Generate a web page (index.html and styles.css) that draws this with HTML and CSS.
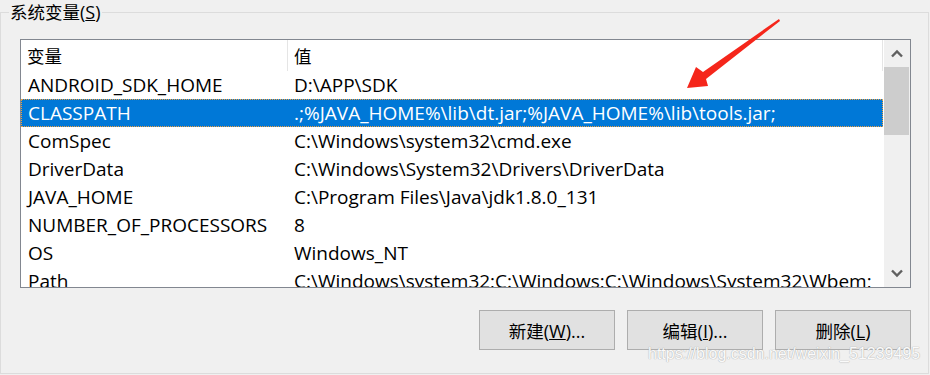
FILE: index.html
```html
<!DOCTYPE html>
<html>
<head>
    <meta charset="utf-8">
    <title>系统变量</title>
    <link rel="stylesheet" href="styles.css">
</head>
<body>
<fieldset class="group">
    <legend class="group-title"><span class="zh">系统变量</span>(<u>S</u>)</legend>
    <div class="listbox">
        <div class="list">
            <div class="list-head">
                <div class="col-name zh">变量</div>
                <div class="col-value zh">值</div>
            </div>
            <div class="row"><div class="col-name">ANDROID_SDK_HOME</div><div class="col-value">D:\APP\SDK</div></div>
            <div class="row selected"><div class="col-name">CLASSPATH</div><div class="col-value">.;%JAVA_HOME%\lib\dt.jar;%JAVA_HOME%\lib\tools.jar;</div></div>
            <div class="row"><div class="col-name">ComSpec</div><div class="col-value">C:\Windows\system32\cmd.exe</div></div>
            <div class="row"><div class="col-name">DriverData</div><div class="col-value">C:\Windows\System32\Drivers\DriverData</div></div>
            <div class="row"><div class="col-name">JAVA_HOME</div><div class="col-value">C:\Program Files\Java\jdk1.8.0_131</div></div>
            <div class="row"><div class="col-name">NUMBER_OF_PROCESSORS</div><div class="col-value">8</div></div>
            <div class="row"><div class="col-name">OS</div><div class="col-value">Windows_NT</div></div>
            <div class="row"><div class="col-name">Path</div><div class="col-value">C:\Windows\system32;C:\Windows;C:\Windows\System32\Wbem;</div></div>
        </div>
        <div class="scrollbar">
            <div class="scroll-btn">
                <svg width="12" height="9" viewBox="0 0 12 9"><polyline points="1,7.5 6,2.5 11,7.5" fill="none" stroke="#606060" stroke-width="2.4"/></svg>
            </div>
            <div class="scroll-thumb"></div>
            <div class="scroll-track"></div>
            <div class="scroll-btn">
                <svg width="12" height="9" viewBox="0 0 12 9"><polyline points="1,1.5 6,6.5 11,1.5" fill="none" stroke="#606060" stroke-width="2.4"/></svg>
            </div>
        </div>
    </div>
    <div class="buttons">
        <button class="btn"><span class="zh">新建</span>(<u>W</u>)...</button>
        <button class="btn"><span class="zh">编辑</span>(<u>I</u>)...</button>
        <button class="btn"><span class="zh">删除</span>(<u>L</u>)</button>
    </div>
</fieldset>

<svg class="arrow" width="930" height="375" viewBox="0 0 930 375">
    <polygon points="779,19 703,72 696,67 687,88 708,86 706,79 780,21" fill="#f5261b"/>
</svg>
<div class="watermark">https://blog.csdn.net/weixin_51239495</div>
</body>
</html>
```

FILE: styles.css
```css
*{
    box-sizing: border-box;
}
body{
    margin: 0;
    width: 930px;
    height: 375px;
    overflow: hidden;
    background: #f0f0f0;
    font-family: "Open Sans", "Noto Sans CJK SC", sans-serif;
    font-size: 19px;
    color: #000;
    position: relative;
}
.zh{
    font-family: "Noto Sans CJK SC", sans-serif;
    font-size: 17.5px;
}
.group{
    margin: 0;
    width: 929px;
    height: 374px;
    border: 1px solid #dcdcdc;
    padding: 15px 17px 0 19px;
}
.group-title{
    padding: 0 1px;
    margin-left: -11px;
    line-height: 24px;
    font-size: 18px;
}
.listbox{
    display: flex;
    width: 891px;
    height: 249px;
    border: 1px solid #828790;
    background: #fff;
}
.list{
    width: 862px;
    overflow: hidden;
}
.list-head, .row{
    display: flex;
}
.list-head{
    height: 31px;
    line-height: 31px;
    border-right: 1px solid #e5e5e5;
}
.list-head .col-name{
    border-right: 1px solid #e5e5e5;
}
.row{
    height: 28px;
    line-height: 26px;
    border: 1px solid transparent;
    white-space: nowrap;
}
.col-name{
    width: 267px;
    padding-left: 6px;
    flex-shrink: 0;
}
.col-value{
    padding-left: 6px;
}
.row .col-name{
    width: 266px;
}
.row.selected{
    background: #0078d7;
    color: #fff;
    border: 1px dotted #f0a040;
}
.scrollbar{
    width: 27px;
    display: flex;
    flex-direction: column;
    background: #f0f0f0;
    border-left: 1px solid #fff;
}
.scroll-btn{
    height: 27px;
    display: flex;
    align-items: center;
    justify-content: center;
}
.scroll-thumb{
    height: 68px;
    margin: 0 1px 0 0;
    background: #cdcdcd;
}
.scroll-track{
    flex: 1;
}
.buttons{
    display: flex;
    justify-content: flex-end;
    gap: 12px;
    margin-top: 22px;
    width: 891px;
}
.btn{
    width: 136px;
    height: 40px;
    border: 1px solid #adadad;
    background: #e1e1e1;
    font-family: "Open Sans", "Noto Sans CJK SC", sans-serif;
    font-size: 18px;
    color: #000;
    padding: 0;
}
.arrow{
    position: absolute;
    left: 0;
    top: 0;
}
.watermark{
    position: absolute;
    left: 648px;
    top: 345px;
    font-family: "Liberation Sans", sans-serif;
    font-size: 16px;
    color: #fafafa;
    text-shadow: 0 0 1px #b0b0b0, 0 0 1px #b0b0b0;
}
```
